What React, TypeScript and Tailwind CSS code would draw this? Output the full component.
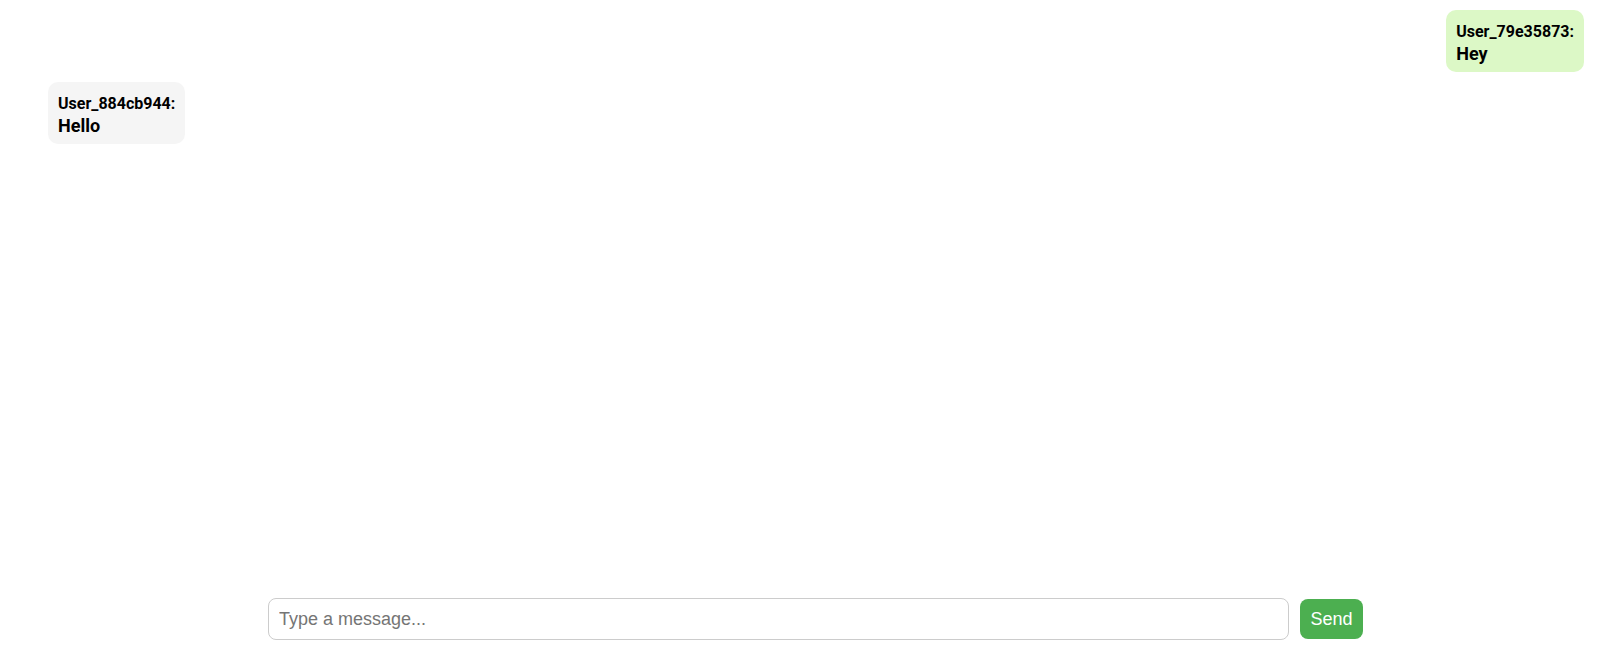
import React from "react";

export default function App() {
  return (
    <div className="flex h-[649px] w-full flex-col bg-white">
      <div className="flex flex-1 flex-col gap-[10px] pl-[48px] pr-[19px] pt-[10px] font-['Roboto',sans-serif] text-black">
        <div className="flex justify-end">
          <div className="rounded-[10px] bg-[#dcf8c6] px-[10px] pb-[8px] pt-[12px]">
            <div className="text-[16px] font-bold leading-[19px]">User_79e35873:</div>
            <div className="mt-[2px] text-[18px] font-bold leading-[21px]">Hey</div>
          </div>
        </div>
        <div className="flex justify-start">
          <div className="rounded-[10px] bg-[#f5f5f5] px-[10px] pb-[8px] pt-[12px]">
            <div className="text-[16px] font-bold leading-[19px]">User_884cb944:</div>
            <div className="mt-[2px] text-[18px] font-bold leading-[21px]">Hello</div>
          </div>
        </div>
      </div>
      <div className="flex items-center gap-[11px] pb-[9px] pl-[268px] font-['Liberation_Sans',Arial,sans-serif]">
        <input
          type="text"
          placeholder="Type a message..."
          className="h-[42px] w-[1021px] rounded-[8px] border border-[#cccccc] px-[10px] text-[18px] text-black placeholder:text-[#757575] outline-none"
        />
        <button className="h-[40px] w-[63px] rounded-[8px] bg-[#4caf50] text-[18px] text-white">
          Send
        </button>
      </div>
    </div>
  );
}
